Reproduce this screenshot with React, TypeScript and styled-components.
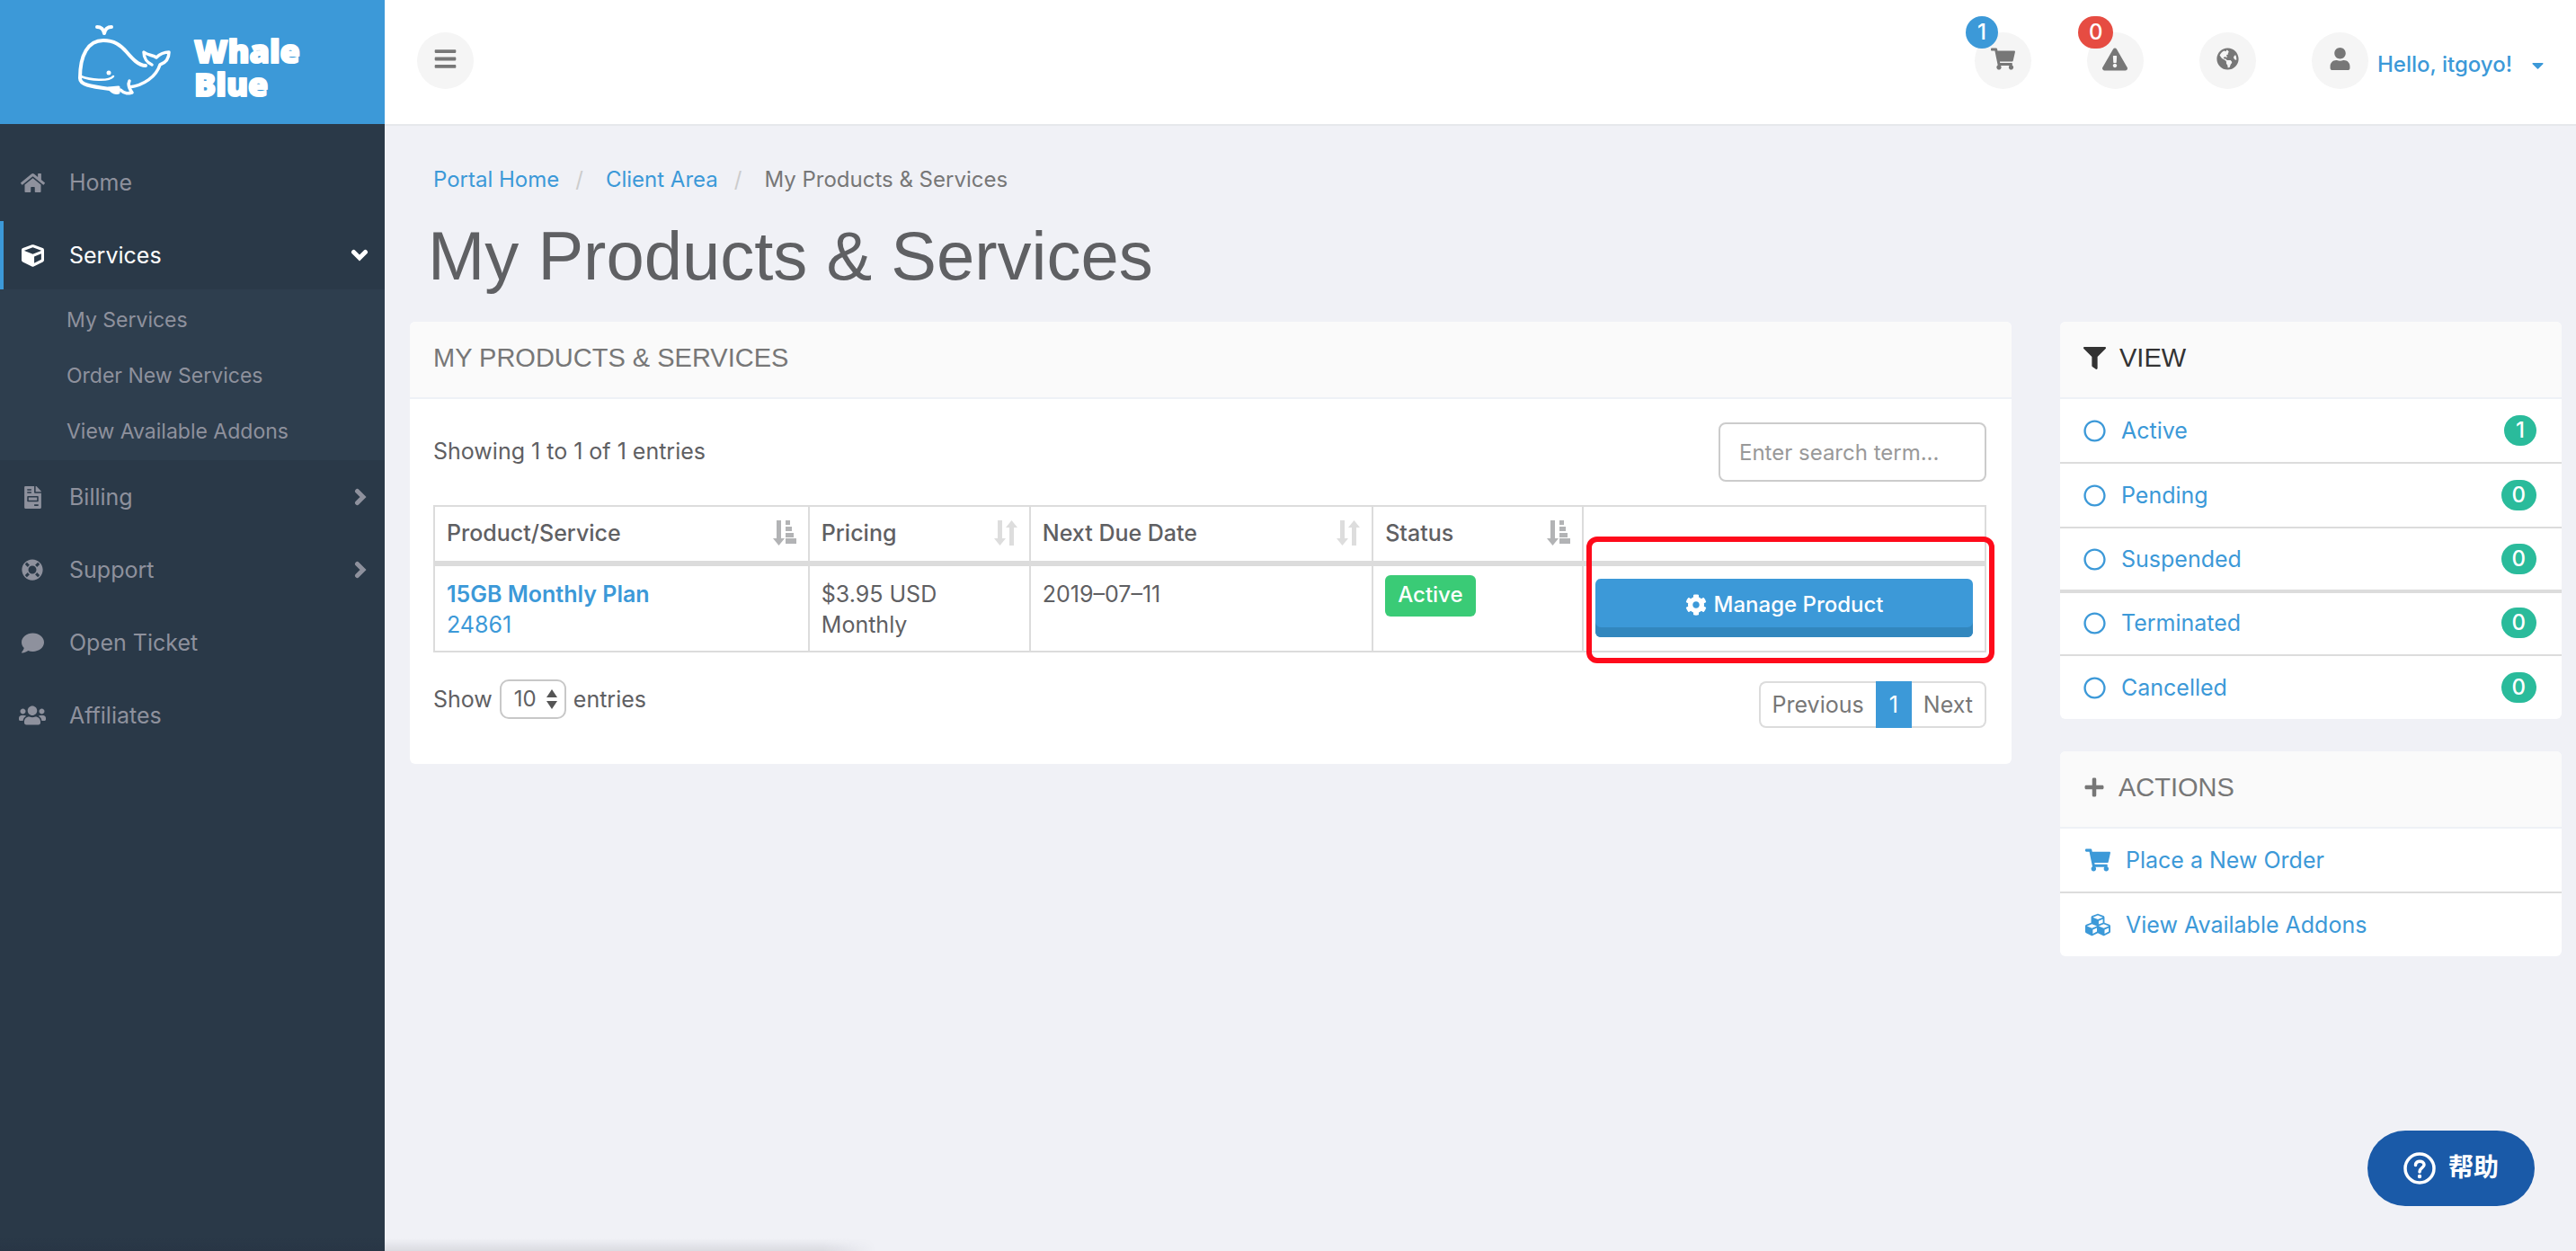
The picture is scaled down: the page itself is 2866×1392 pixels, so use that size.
import React from "react";
import styled, { createGlobalStyle, css } from "styled-components";
import {
  FaHome, FaCube, FaFileInvoice, FaLifeRing, FaComment, FaUsers,
  FaBars, FaShoppingCart, FaExclamationTriangle, FaGlobeAmericas, FaUser, FaCaretDown, FaCog,
  FaFilter, FaPlus, FaCubes, FaRegCircle,
} from "react-icons/fa";

const c = {
  blue: "#3c99d8",
  blueDark: "#3287be",
  side: "#2a3948",
  sub: "#2e3e4e",
  sideText: "#8e919d",
  page: "#f0f1f6",
  text: "#5f6063",
  muted: "#777777",
  line: "#dcdcdc",
  green: "#3acb76",
  teal: "#2abb9b",
  red: "#e64c42",
};
const size = { small: 23, base: 24, large: 25 };
const head = `"Liberation Sans", Arial, sans-serif`;

const Global = createGlobalStyle`
  *, *::before, *::after { box-sizing: border-box; }
  body { margin: 0; background: ${c.page}; color: ${c.text}; font: 400 ${size.base}px/34px Inter, "Noto Sans CJK SC", sans-serif; }
  a { color: ${c.blue}; text-decoration: none; }
  ul, ol { list-style: none; margin: 0; padding: 0; }
  button, input, select { font: inherit; color: inherit; margin: 0; }
  button { cursor: pointer; }
  svg { display: block; flex: none; }
`;

const Shell = styled.div`
  display: grid;
  grid-template-columns: 428px minmax(0, 1fr);
  min-height: 100vh;
`;
const Sidebar = styled.aside`
  background: ${c.side};
`;
const Brand = styled.a`
  display: flex;
  align-items: center;
  height: 138px;
  padding-left: 80px;
  background: ${c.blue};
`;
const NavList = styled.ul`
  padding-top: 27px;
`;
const NavItem = styled.li`
  & + & { margin-top: 5px; }
`;
const NavLink = styled.a<{ $active?: boolean }>`
  display: grid;
  grid-template-columns: 64px 1fr auto;
  align-items: center;
  height: 76px;
  padding: 0 18px 0 9px;
  border-left: 4px solid ${(p) => (p.$active ? c.blue : "transparent")};
  color: ${(p) => (p.$active ? "#ffffff" : c.sideText)};
  font-size: ${size.large}px;
`;
const NavIcon = styled.span`
  display: flex;
  justify-content: center;
  width: 46px;
`;
const SubNav = styled.ul`
  margin-bottom: -2px;
  padding: 3px 0 1px;
  background: ${c.sub};
`;
const SubLink = styled.a`
  display: block;
  padding: 14px 0 14px 74px;
  color: ${c.sideText};
  font-size: ${size.small}px;
`;

const Main = styled.div`
  display: flex;
  flex-direction: column;
  min-width: 0;
`;
const TopBar = styled.header`
  display: flex;
  justify-content: space-between;
  height: 140px;
  padding: 36px 32px 0 36px;
  background: #ffffff;
  border-bottom: 2px solid #e6e8ec;
`;
const Round = styled.button`
  display: flex;
  align-items: center;
  justify-content: center;
  width: 63px;
  height: 63px;
  padding: 0 0 4px;
  border: 0;
  border-radius: 32px;
  background: #f5f5f5;
  color: ${c.muted};
`;
const TopTools = styled.div`
  display: flex;
  gap: 62px;
`;
const Tool = styled.div`
  position: relative;
  display: flex;
`;
const Count = styled.span<{ $color: string }>`
  position: absolute;
  top: -18px;
  left: -10px;
  min-width: 36px;
  height: 36px;
  padding: 0 12px;
  border-radius: 18px;
  background: ${(p) => p.$color};
  color: #ffffff;
  font-weight: 500;
  line-height: 36px;
  text-align: center;
`;
const Account = styled.a`
  display: flex;
  align-items: center;
  gap: 18px;
  height: 72px;
  padding-left: 10px;
  font-weight: 500;
`;

const Content = styled.main`
  padding: 43px 16px 40px 28px;
`;
const Crumbs = styled.ol`
  display: flex;
  padding-left: 26px;
  color: ${c.muted};
  li + li::before { content: "/"; padding: 0 25px 0 18px; color: #cccccc; }
`;
const Title = styled.h1`
  margin: 26px 0 31px;
  padding-left: 20px;
  font: 400 76px/84px ${head};
`;
const Columns = styled.div`
  display: grid;
  grid-template-columns: minmax(0, 1782fr) minmax(0, 558fr);
  gap: 54px;
  align-items: start;
`;
const SideColumn = styled.div`
  display: grid;
  gap: 36px;
`;
const Panel = styled.section`
  overflow: hidden;
  border-radius: 6px;
  background: #ffffff;
  font-size: ${size.large}px;
`;
const PanelHead = styled.h2<{ $color?: string }>`
  display: flex;
  align-items: center;
  gap: 15px;
  height: 86px;
  margin: 0;
  padding: 0 26px 4px;
  border-bottom: 2px solid #eef1f6;
  background: #fafafa;
  color: ${(p) => p.$color ?? c.muted};
  font: 400 29px/32px ${head};
`;
const PanelBody = styled.div`
  padding: 26px 28px 40px 26px;
`;
const Bar = styled.div`
  display: flex;
  justify-content: space-between;
  align-items: flex-start;
`;
const Info = styled.p`
  margin: 0;
  padding-top: 15px;
`;
const Search = styled.input`
  width: 298px;
  height: 66px;
  padding: 0 21px;
  border: 2px solid #cccccc;
  border-radius: 8px;
  background: #ffffff;
  font-size: ${size.base}px;
  &::placeholder { color: #999999; opacity: 1; }
`;
const Frame = styled.div`
  position: relative;
  margin: 26px 0 30px;
`;
const Table = styled.table`
  width: 100%;
  table-layout: fixed;
  border-collapse: separate;
  border-spacing: 0;
  border: solid ${c.line};
  border-width: 2px 0 0 2px;
`;
const cell = css`
  padding: 14px 13px;
  border-right: 2px solid ${c.line};
  text-align: left;
  vertical-align: top;
`;
const Th = styled.th`
  ${cell}
  height: 66px;
  padding-top: 12px;
  border-bottom: 6px solid ${c.line};
  font-weight: 500;
`;
const Td = styled.td<{ $top?: number }>`
  ${cell}
  height: 96px;
  padding-top: ${(p) => p.$top ?? 14}px;
  padding-bottom: 12px;
  border-bottom: 2px solid ${c.line};
`;
const HeadCell = styled.div`
  display: flex;
  justify-content: space-between;
  align-items: center;
`;
const Strong = styled.a`
  font-weight: 600;
`;
const Status = styled.span`
  display: inline-block;
  padding: 5px 14px 7px;
  border-radius: 6px;
  background: ${c.green};
  color: #ffffff;
  font-size: ${size.base}px;
  font-weight: 500;
`;
const Manage = styled.button`
  display: flex;
  align-items: center;
  justify-content: center;
  gap: 8px;
  width: 100%;
  height: 65px;
  padding: 0 0 8px;
  border: 0;
  border-radius: 6px;
  background: ${c.blue};
  box-shadow: inset 0 -11px 0 ${c.blueDark};
  color: #ffffff;
  font-size: ${size.base}px;
  font-weight: 500;
`;
const Highlight = styled.div`
  position: absolute;
  top: 35px;
  right: -9px;
  width: 454px;
  height: 141px;
  border: 6px solid #fe0b1b;
  border-radius: 12px;
  pointer-events: none;
`;
const Length = styled.label`
  display: flex;
  align-items: center;
  gap: 8px;
`;
const SelectBox = styled.span`
  position: relative;
  display: flex;
  svg { position: absolute; right: 10px; top: 11px; pointer-events: none; }
`;
const Select = styled.select`
  appearance: none;
  width: 74px;
  height: 44px;
  padding: 0 0 0 14px;
  border: 2px solid #c8c8c8;
  border-radius: 10px;
  background: #ffffff;
  font-size: ${size.base}px;
`;
const Pager = styled.nav`
  display: flex;
  margin-top: 2px;
`;
const PageButton = styled.button<{ $current?: boolean }>`
  height: 52px;
  padding: 0 13px;
  border: 2px solid ${(p) => (p.$current ? c.blue : c.line)};
  background: ${(p) => (p.$current ? c.blue : "#ffffff")};
  color: ${(p) => (p.$current ? "#ffffff" : c.muted)};
  &:first-child { border-right: 0; border-radius: 8px 0 0 8px; }
  &:last-child { border-left: 0; border-radius: 0 8px 8px 0; }
`;
const Row = styled.a<{ $thick?: boolean }>`
  display: flex;
  align-items: center;
  height: 72px;
  padding: 0 28px 0 26px;
  border-bottom: ${(p) => (p.$thick ? 4 : 2)}px solid ${c.line};
  margin-bottom: ${(p) => (p.$thick ? -2 : 0)}px;
  li:last-child > & { height: 70px; border-bottom: 0; }
`;
const RowIcon = styled.span<{ $wide?: boolean }>`
  display: flex;
  justify-content: flex-end;
  width: ${(p) => (p.$wide ? 30 : 25)}px;
  margin-right: 17px;
`;
const Badge = styled.span`
  min-width: 36px;
  height: 34px;
  margin-left: auto;
  padding: 0 12px;
  border-radius: 17px;
  background: ${c.teal};
  color: #ffffff;
  font-size: ${size.base}px;
  font-weight: 500;
  line-height: 34px;
  text-align: center;
`;
const Help = styled.button`
  position: fixed;
  right: 46px;
  bottom: 50px;
  display: flex;
  align-items: center;
  gap: 14px;
  height: 84px;
  padding: 0 40px;
  border: 0;
  border-radius: 42px;
  background: #1a5aa8;
  color: #ffffff;
  font: 700 28px/36px "Liberation Sans", "Noto Sans CJK SC", sans-serif;
`;
const EdgeShade = styled.div`
  position: fixed;
  left: 0;
  bottom: 0;
  width: 34%;
  height: 14px;
  background: linear-gradient(to top, rgba(30, 30, 50, 0.1), rgba(30, 30, 50, 0));
  -webkit-mask-image: linear-gradient(to right, #000 94%, transparent);
  pointer-events: none;
`;

function Logo() {
  return (
    <svg width="264" height="100" viewBox="80 18 264 100" fill="none" stroke="#fff" strokeLinecap="round" strokeLinejoin="round">
      <path strokeWidth="4" d="M162 72 C154 72 147 64 141 57 C134 49 127 44 115 44 C98 44 89 60 89 86 C89 93 99 95 122 98" />
      <path strokeWidth="2.500" d="M90 84 C100 88 121 90 126 84" />
      <circle cx="121" cy="80" r="2.500" fill="#fff" stroke="none" />
      <path strokeWidth="3" fill="#fff" d="M121 97 C125 103 129 103 132 102 L132 96 Z" />
      <path strokeWidth="3.500" d="M134 99 C139 104 143 103 147 102 C144 98 142 93 144 89" />
      <path strokeWidth="3.500" d="M144 96 C160 94 174 84 178 71 C184 69 188 65 188 57 C182 57 177 60 174 63 C170 60 165 61 160 57 C160 64 164 69 169 71" />
      <path strokeWidth="4" d="M108 29 C112 29 115 31 116 36 C117 31 120 29 124 29" />
      <text fill="#fff" strokeWidth="2" fontFamily="'Open Sans', sans-serif" fontWeight="800" fontSize="36">
        <tspan x="216" y="69">Whale</tspan>
        <tspan x="216" y="106">Blue</tspan>
      </text>
    </svg>
  );
}

function Chevron({ down }: { down?: boolean }) {
  return (
    <svg width="20" height="20" viewBox="0 0 20 20" fill="none" stroke="currentColor" strokeWidth="5" strokeLinecap="round" strokeLinejoin="miter" aria-hidden="true">
      <path d={down ? "M3.500 6.500l6.500 6.500 6.500-6.500" : "M7.500 3.500L14 10l-6.500 6.500"} />
    </svg>
  );
}

function SortIcon({ active }: { active?: boolean }) {
  return active ? (
    <svg width="26" height="28" viewBox="0 0 26 28" fill="#b2b3b5" aria-hidden="true">
      <path d="M4 0h5v20h4l-6.500 8-6.500-8h4z" />
      <path d="M14 0h5v5h-5zM14 7h7v5h-7zM14 14h9v5h-9zM14 20h12v6h-12z" />
    </svg>
  ) : (
    <svg width="26" height="28" viewBox="0 0 26 28" fill="#dddddd" aria-hidden="true">
      <path d="M4 0h5v20h4l-6.500 8-6.500-8h4z" />
      <path d="M17 28h5V8h4l-6.500-8-6.500 8h4z" />
    </svg>
  );
}

const subLinks = ["My Services", "Order New Services", "View Available Addons"];
const nav = [
  { label: "Home", Icon: FaHome, icon: 27 },
  { label: "Services", Icon: FaCube, icon: 25, open: true },
  { label: "Billing", Icon: FaFileInvoice, icon: 25, more: true },
  { label: "Support", Icon: FaLifeRing, icon: 24, more: true },
  { label: "Open Ticket", Icon: FaComment, icon: 25 },
  { label: "Affiliates", Icon: FaUsers, icon: 30 },
];
const tools = [
  { label: "Cart", Icon: FaShoppingCart, count: "1", color: c.blue, icon: 27 },
  { label: "Notifications", Icon: FaExclamationTriangle, count: "0", color: c.red, icon: 28 },
  { label: "Language", Icon: FaGlobeAmericas, icon: 25 },
];
const columns = [
  { label: "Product/Service", width: "24.15%", sort: true, active: true },
  { label: "Pricing", width: "14.25%", sort: true },
  { label: "Next Due Date", width: "22.1%", sort: true },
  { label: "Status", width: "13.55%", sort: true, active: true },
  { label: "", width: "25.95%" },
];
const views = [
  { label: "Active", count: 1 },
  { label: "Pending", count: 0 },
  { label: "Suspended", count: 0, thick: true },
  { label: "Terminated", count: 0 },
  { label: "Cancelled", count: 0 },
];

export default function App() {
  return (
    <Shell>
      <Global />
      <Sidebar>
        <Brand href="#" aria-label="Whale Blue"><Logo /></Brand>
        <nav>
          <NavList>
            {nav.map(({ label, Icon, icon, open, more }) => (
              <NavItem key={label}>
                <NavLink href="#" $active={open}>
                  <NavIcon><Icon size={icon} /></NavIcon>
                  {label}
                  {open && <Chevron down />}
                  {more && <Chevron />}
                </NavLink>
                {open && (
                  <SubNav>
                    {subLinks.map((s) => <li key={s}><SubLink href="#">{s}</SubLink></li>)}
                  </SubNav>
                )}
              </NavItem>
            ))}
          </NavList>
        </nav>
      </Sidebar>

      <Main>
        <TopBar>
          <Round aria-label="Toggle menu"><FaBars size={27} /></Round>
          <TopTools>
            {tools.map(({ label, Icon, count, color, icon }) => (
              <Tool key={label}>
                <Round aria-label={label}><Icon size={icon} /></Round>
                {count && <Count $color={color!}>{count}</Count>}
              </Tool>
            ))}
            <Tool>
              <Round aria-label="Account"><FaUser size={25} /></Round>
              <Account href="#">Hello, itgoyo! <FaCaretDown size={21} /></Account>
            </Tool>
          </TopTools>
        </TopBar>

        <Content>
          <Crumbs>
            <li><a href="#">Portal Home</a></li>
            <li><a href="#">Client Area</a></li>
            <li>My Products &amp; Services</li>
          </Crumbs>
          <Title>My Products &amp; Services</Title>

          <Columns>
            <Panel>
              <PanelHead>MY PRODUCTS &amp; SERVICES</PanelHead>
              <PanelBody>
                <Bar>
                  <Info>Showing 1 to 1 of 1 entries</Info>
                  <Search type="search" aria-label="Search" placeholder="Enter search term..." />
                </Bar>
                <Frame>
                  <Table>
                    <colgroup>
                      {columns.map((col) => <col key={col.label} style={{ width: col.width }} />)}
                    </colgroup>
                    <thead>
                      <tr>
                        {columns.map((col) => (
                          <Th key={col.label} scope="col">
                            <HeadCell>{col.label}{col.sort && <SortIcon active={col.active} />}</HeadCell>
                          </Th>
                        ))}
                      </tr>
                    </thead>
                    <tbody>
                      <tr>
                        <Td><Strong href="#">15GB Monthly Plan</Strong><br /><a href="#">24861</a></Td>
                        <Td>$3.95 USD<br />Monthly</Td>
                        <Td>2019–07–11</Td>
                        <Td $top={10}><Status>Active</Status></Td>
                        <Td><Manage><FaCog size={24} />Manage Product</Manage></Td>
                      </tr>
                    </tbody>
                  </Table>
                  <Highlight />
                </Frame>
                <Bar>
                  <Length>
                    Show
                    <SelectBox>
                      <Select defaultValue="10"><option>10</option><option>25</option><option>50</option></Select>
                      <svg width="12" height="22" viewBox="0 0 12 22" fill="#555" aria-hidden="true">
                        <path d="M6 0l6 9H0zM6 22l6-9H0z" />
                      </svg>
                    </SelectBox>
                    entries
                  </Length>
                  <Pager aria-label="Pages">
                    <PageButton>Previous</PageButton>
                    <PageButton $current aria-current="page">1</PageButton>
                    <PageButton>Next</PageButton>
                  </Pager>
                </Bar>
              </PanelBody>
            </Panel>

            <SideColumn>
              <Panel>
                <PanelHead $color="#333333"><FaFilter size={25} />VIEW</PanelHead>
                <ul>
                  {views.map((v) => (
                    <li key={v.label}>
                      <Row href="#" $thick={v.thick}>
                        <RowIcon><FaRegCircle size={25} /></RowIcon>{v.label}<Badge>{v.count}</Badge>
                      </Row>
                    </li>
                  ))}
                </ul>
              </Panel>
              <Panel>
                <PanelHead><FaPlus size={24} />ACTIONS</PanelHead>
                <ul>
                  <li><Row href="#"><RowIcon $wide><FaShoppingCart size={28} /></RowIcon>Place a New Order</Row></li>
                  <li><Row href="#"><RowIcon $wide><FaCubes size={28} /></RowIcon>View Available Addons</Row></li>
                </ul>
              </Panel>
            </SideColumn>
          </Columns>
        </Content>
      </Main>

      <Help>
        <svg width="36" height="36" viewBox="0 0 36 36" fill="none" stroke="#fff" strokeWidth="3.500" strokeLinecap="round" aria-hidden="true">
          <circle cx="18" cy="18" r="16" />
          <path d="M13.500 14.500c0-6 9.500-5.500 9.500-.500 0 3.500-5 3.500-5 8" />
          <circle cx="18" cy="27" r="2.200" fill="#fff" stroke="none" />
        </svg>
        帮助
      </Help>
      <EdgeShade />
    </Shell>
  );
}
